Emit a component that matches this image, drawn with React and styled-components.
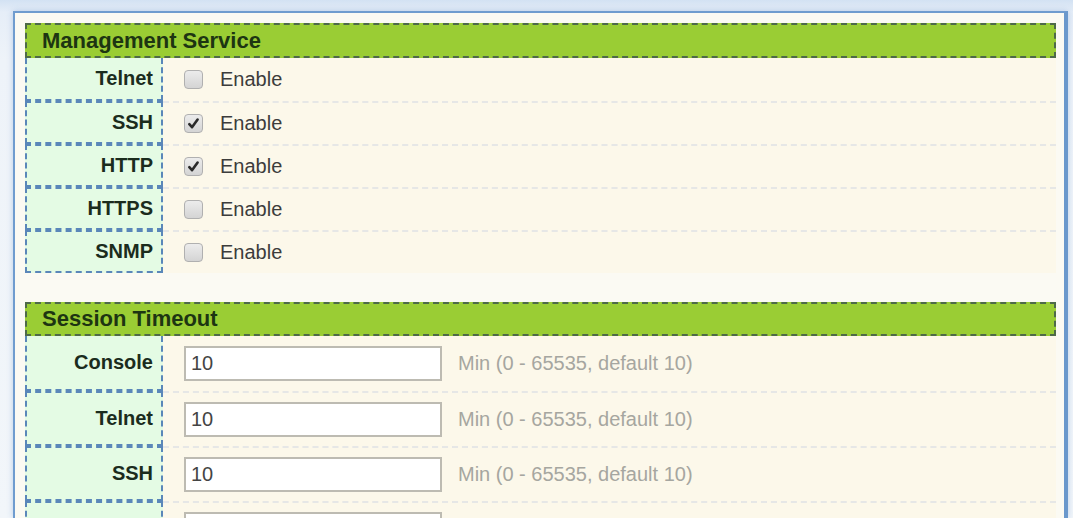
import React from "react";
import styled, { createGlobalStyle } from "styled-components";

const GlobalStyle = createGlobalStyle`
  html, body { margin: 0; padding: 0; }
  body {
    width: 1073px;
    height: 518px;
    overflow: hidden;
    font-family: "Liberation Sans", Arial, sans-serif;
    background: linear-gradient(180deg, #d3e2f3 0px, #e6eef8 12px, #eef3f9 60px, #f2f6fa 100%);
  }
`;

const Page = styled.div`
  box-sizing: border-box;
  height: 518px;
  padding: 11px 5px 0 13px;
`;

const Frame = styled.div`
  box-sizing: border-box;
  height: 100%;
  overflow: hidden;
  border: 2px solid #6f9ccf;
  border-right: 4px solid #6a98cc;
  border-bottom: none;
  background: #fbfaf3;
  padding: 10px 8px 0 10px;
  box-shadow: 0 0 6px rgba(120, 160, 210, 0.45);
`;

const Section = styled.section`
  margin-bottom: 29px;
`;

const SectionHeader = styled.div`
  box-sizing: border-box;
  height: ${(p) => p.$h}px;
  display: flex;
  align-items: center;
  padding-left: 15px;
  background: #9acd34;
  border: 2px dashed #4e6a48;
  font-size: 22px;
  font-weight: bold;
  color: #1d3512;
`;

const Rows = styled.div`
  display: flex;
  flex-direction: column;
`;

const Row = styled.div`
  display: flex;
  height: ${(p) => p.$h}px;
`;

const LabelCell = styled.div`
  box-sizing: border-box;
  width: 138px;
  flex: none;
  display: flex;
  align-items: center;
  justify-content: flex-end;
  padding-right: 8px;
  background: #e4fbe4;
  border: 2px dashed #5a87b9;
  border-top-width: ${(p) => (p.$first ? 0 : 2)}px;
  font-size: 20px;
  font-weight: bold;
  color: #1b2c1d;
`;

const ValueCell = styled.div`
  box-sizing: border-box;
  flex: 1;
  display: flex;
  align-items: center;
  gap: 16px;
  padding-left: 21px;
  background: #fcf8ea;
  border-top: ${(p) => (p.$first ? "none" : "2px dashed rgba(208, 214, 226, 0.5)")};
  font-size: 20px;
  color: #3a3a3a;
`;

const CheckBox = styled.span`
  box-sizing: border-box;
  width: 19px;
  height: 19px;
  border-radius: 4px;
  border: 1px solid #b0b0b0;
  background: linear-gradient(180deg, #ececec, #d4d4d4);
  display: inline-flex;
  align-items: center;
  justify-content: center;
`;

const CheckLabel = styled.label`
  display: flex;
  align-items: center;
  gap: 17px;
  color: #3c3c3c;
`;

const TextInput = styled.input`
  box-sizing: border-box;
  width: 258px;
  height: 35px;
  border: 2px solid #bdbbb2;
  background: #fff;
  padding: 0 5px;
  font-family: "Liberation Sans", Arial, sans-serif;
  font-size: 20px;
  color: #444;
  outline: none;
`;

const Hint = styled.span`
  color: #a6a6a0;
  font-size: 20px;
`;

function Check({ checked }) {
  return (
    <CheckBox>
      {checked && (
        <svg width="13" height="13" viewBox="0 0 13 13">
          <path d="M2.3 7.2 L5 10.2 L10.6 2.6" fill="none" stroke="#2a2a2a" strokeWidth="2.6" strokeLinecap="round" strokeLinejoin="round" />
        </svg>
      )}
    </CheckBox>
  );
}

const services = [
  { name: "Telnet", on: false },
  { name: "SSH", on: true },
  { name: "HTTP", on: true },
  { name: "HTTPS", on: false },
  { name: "SNMP", on: false },
];

const timeouts = [
  { name: "Console", value: "10" },
  { name: "Telnet", value: "10" },
  { name: "SSH", value: "10" },
  { name: "", value: "", partial: true },
];

export default function App() {
  return (
    <>
      <GlobalStyle />
      <Page>
        <Frame>
          <Section>
            <SectionHeader $h={35}>Management Service</SectionHeader>
            <Rows>
              {services.map((s, i) => (
                <Row key={s.name} $h={43}>
                  <LabelCell $first={i === 0}>{s.name}</LabelCell>
                  <ValueCell $first={i === 0}>
                    <CheckLabel>
                      <Check checked={s.on} />
                      Enable
                    </CheckLabel>
                  </ValueCell>
                </Row>
              ))}
            </Rows>
          </Section>
          <Section>
            <SectionHeader $h={34}>Session Timeout</SectionHeader>
            <Rows>
              {timeouts.map((t, i) => (
                <Row key={i} $h={55}>
                  <LabelCell $first={i === 0}>{t.name}</LabelCell>
                  <ValueCell $first={i === 0}>
                    <TextInput defaultValue={t.value} />
                    {!t.partial && <Hint>Min (0 - 65535, default 10)</Hint>}
                  </ValueCell>
                </Row>
              ))}
            </Rows>
          </Section>
        </Frame>
      </Page>
    </>
  );
}
